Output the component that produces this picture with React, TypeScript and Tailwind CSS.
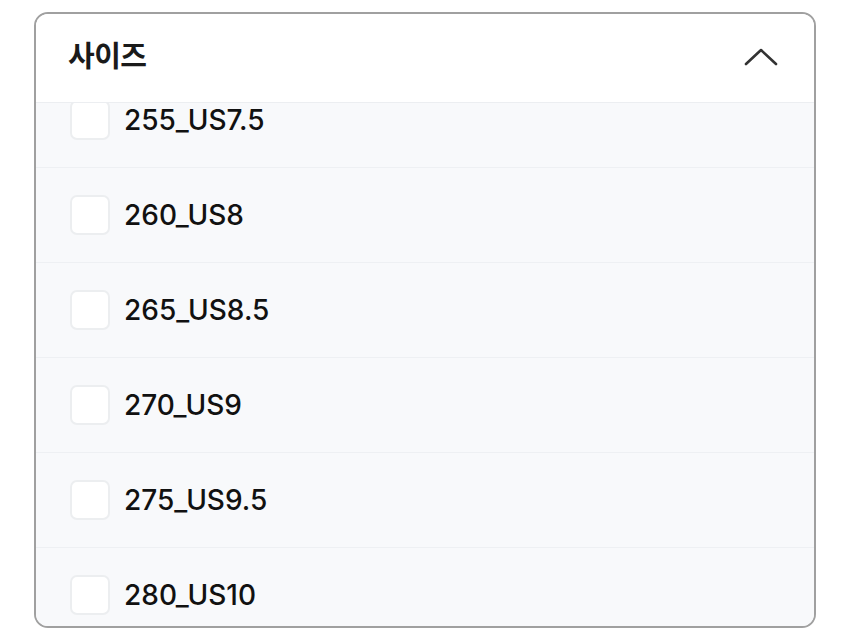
import React from "react";

const sizes = ["255_US7.5", "260_US8", "265_US8.5", "270_US9", "275_US9.5", "280_US10"];

export default function App() {
  return (
    <div className="w-[850px] h-[637px] bg-white pt-[12px] px-[34px]" style={{ fontFamily: 'Inter, "Noto Sans CJK KR", sans-serif' }}>
      <div className="h-[616px] border-2 border-[#a0a0a0] rounded-[14px] overflow-hidden flex flex-col">
        <div className="h-[89px] shrink-0 bg-white flex items-center justify-between pl-[32px] pr-[36px] border-b border-[#eceef1] relative z-10">
          <span className="text-[29px] font-bold text-[#1a1a1a] tracking-[-0.5px] mt-[-6px]" style={{ fontFamily: '"Noto Sans CJK KR", sans-serif' }}>사이즈</span>
          <svg width="34" height="20" viewBox="0 0 34 20" fill="none" className="mt-[-2px]">
            <path d="M2 17 L17 3 L32 17" stroke="#333" strokeWidth="2.6" strokeLinecap="round" strokeLinejoin="round" />
          </svg>
        </div>
        <div className="flex-1 overflow-hidden bg-[#f8f9fb]">
          <div className="mt-[-31px]">
            {sizes.map((s, i) => (
              <div key={s} className={`h-[95px] flex items-center pl-[34px] ${i > 0 ? "border-t border-[#eef0f3]" : ""}`}>
                <div className="w-[40px] h-[40px] rounded-[7px] bg-white border-2 border-[#eceef0]" />
                <span className="ml-[14px] text-[28px] font-medium text-[#111]">{s}</span>
              </div>
            ))}
          </div>
        </div>
      </div>
    </div>
  );
}
